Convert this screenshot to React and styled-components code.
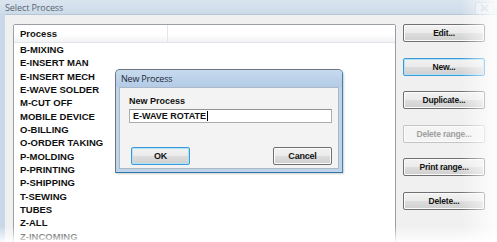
import React from "react";
import styled, { createGlobalStyle } from "styled-components";

const processes = [
  "B-MIXING",
  "E-INSERT MAN",
  "E-INSERT MECH",
  "E-WAVE SOLDER",
  "M-CUT OFF",
  "MOBILE DEVICE",
  "O-BILLING",
  "O-ORDER TAKING",
  "P-MOLDING",
  "P-PRINTING",
  "P-SHIPPING",
  "T-SEWING",
  "TUBES",
  "Z-ALL",
  "Z-INCOMING",
];

const actions = [
  { label: "Edit..." },
  { label: "New...", focused: true },
  { label: "Duplicate..." },
  { label: "Delete range...", disabled: true },
  { label: "Print range..." },
  { label: "Delete..." },
];

const App = () => {
  return (
    <>
      <GlobalStyle />
      <Window>
        <TitleBar>
          <Title>Select Process</Title>
          <CloseBox>
            <svg width="9" height="8" viewBox="0 0 9 8">
              <path d="M1 1 L8 7 M8 1 L1 7" stroke="#b9c4d0" strokeWidth="1.6" />
            </svg>
          </CloseBox>
        </TitleBar>
        <Body>
          <ListBox>
            <ListHeader>
              <HeaderCell>Process</HeaderCell>
              <HeaderRest />
            </ListHeader>
            {processes.map((p) => (
              <Row key={p}>{p}</Row>
            ))}
          </ListBox>
          <ButtonColumn>
            {actions.map((a) => (
              <SideButton key={a.label} $focused={a.focused} $disabled={a.disabled}>
                {a.label}
              </SideButton>
            ))}
          </ButtonColumn>
        </Body>

        <Dialog>
          <DialogTitle>New Process</DialogTitle>
          <DialogBody>
            <Label>New Process</Label>
            <Input>
              E-WAVE ROTATE<Caret />
            </Input>
            <DialogButtons>
              <DialogButton $focused>OK</DialogButton>
              <DialogButton>Cancel</DialogButton>
            </DialogButtons>
          </DialogBody>
        </Dialog>

        <FadeRight />
        <FadeBottom />
      </Window>
    </>
  );
};

export default App;

const GlobalStyle = createGlobalStyle`
  html, body {
    margin: 0;
    padding: 0;
    background: #ffffff;
  }
  body {
    font-family: "Liberation Sans", Arial, sans-serif;
  }
`;

const Window = styled.div`
  position: relative;
  width: 497px;
  height: 242px;
  overflow: hidden;
  background: #c9d8e8;
  display: flex;
  flex-direction: column;
`;

const TitleBar = styled.div`
  height: 14px;
  display: flex;
  align-items: center;
  justify-content: space-between;
  padding: 0 3px 0 5px;
  background: linear-gradient(#d9e4ef, #cddbe9);
`;

const Title = styled.div`
  font-family: "Open Sans", "DejaVu Sans", sans-serif;
  font-size: 9px;
  color: #5a6470;
  letter-spacing: -0.1px;
`;

const CloseBox = styled.div`
  width: 17px;
  height: 11px;
  margin-top: 2px;
  border: 1px solid #c8d2dc;
  border-radius: 2px;
  display: flex;
  align-items: center;
  justify-content: center;
  background: #e3eaf1;
`;

const Body = styled.div`
  flex: 1;
  margin-left: 5px;
  background: #f0f0f0;
  border-top: 1px solid #b7c6d6;
  display: flex;
  align-items: flex-start;
  padding: 9px 0 0 8px;
  gap: 7px;
`;

const ListBox = styled.div`
  width: 381px;
  height: 240px;
  background: #ffffff;
  border: 1px solid #9a9fa6;
  border-radius: 2px 2px 0 0;
`;

const ListHeader = styled.div`
  height: 17px;
  display: flex;
  background: linear-gradient(#ffffff 55%, #f1f2f4);
  border-bottom: 1px solid #e2e4e7;
`;

const HeaderCell = styled.div`
  width: 147px;
  padding-left: 6px;
  display: flex;
  align-items: center;
  font-weight: bold;
  font-size: 9.5px;
  color: #111111;
  border-right: 1px solid #e4e6e9;
`;

const HeaderRest = styled.div`
  flex: 1;
`;

const Row = styled.div`
  height: 13.35px;
  line-height: 13.35px;
  padding-left: 6px;
  font-weight: bold;
  font-size: 9.5px;
  color: #0f0f0f;
  &:first-of-type {
    margin-top: 1px;
  }
`;

const ButtonColumn = styled.div`
  display: flex;
  flex-direction: column;
  gap: 15.6px;
`;

const SideButton = styled.div`
  width: 80px;
  height: 16px;
  display: flex;
  align-items: center;
  justify-content: center;
  font-weight: bold;
  font-size: 8.5px;
  letter-spacing: -0.2px;
  color: ${({ $disabled }) => ($disabled ? "#a0a0a0" : "#141414")};
  border: 1px solid
    ${({ $focused, $disabled }) =>
      $focused ? "#3c9ad6" : $disabled ? "#c4c4c4" : "#707070"};
  border-radius: 2px;
  background: ${({ $disabled }) =>
    $disabled
      ? "#f4f4f4"
      : "linear-gradient(#f2f2f2 0%, #ebebeb 48%, #dddddd 52%, #cfcfcf 100%)"};
  box-shadow: ${({ $focused }) =>
    $focused ? "inset 0 0 0 1px #aee2f8" : "inset 0 0 0 1px #fbfbfb"};
`;

const Dialog = styled.div`
  position: absolute;
  left: 115px;
  top: 69px;
  width: 226px;
  height: 102px;
  border: 1px solid #6e7680;
  border-right-color: #3d84b0;
  border-bottom-color: #2f7aa8;
  border-radius: 5px 5px 0 0;
  background: #c0d4e9;
  display: flex;
  flex-direction: column;
  box-shadow: 1px 1px 2px rgba(0, 0, 0, 0.2);
`;

const DialogTitle = styled.div`
  height: 17px;
  display: flex;
  align-items: center;
  padding-left: 5px;
  font-family: "Open Sans", "DejaVu Sans", sans-serif;
  font-size: 9px;
  color: #1e2a38;
  letter-spacing: -0.2px;
  background: linear-gradient(#c7daee, #b3cbe6);
  border-radius: 4px 4px 0 0;
`;

const DialogBody = styled.div`
  flex: 1;
  margin: 0 3px 3px 3px;
  background: #f3f3f3;
  border: 1px solid #aab8c8;
  padding: 6px 6px 0 9px;
  display: flex;
  flex-direction: column;
`;

const Label = styled.div`
  font-weight: bold;
  font-size: 9px;
  color: #111111;
  height: 13px;
  line-height: 13px;
  margin-top: 1px;
`;

const Input = styled.div`
  height: 12px;
  margin-top: 1px;
  border: 1px solid #abadb3;
  border-top-color: #8e9196;
  background: #ffffff;
  display: flex;
  align-items: center;
  padding-left: 3px;
  font-weight: bold;
  font-size: 9px;
  color: #111111;
`;

const Caret = styled.span`
  display: inline-block;
  width: 1px;
  height: 10px;
  background: #000;
  margin-left: 1px;
`;

const DialogButtons = styled.div`
  display: flex;
  justify-content: space-between;
  margin-top: 24px;
  padding: 0 0 0 2px;
`;

const DialogButton = styled(SideButton)`
  width: 57px;
  font-size: 9px;
`;

const FadeRight = styled.div`
  position: absolute;
  top: 0;
  right: 0;
  width: 36px;
  height: 100%;
  background: linear-gradient(to right, rgba(255, 255, 255, 0), rgba(255, 255, 255, 0.88));
  pointer-events: none;
`;

const FadeBottom = styled.div`
  position: absolute;
  left: 0;
  bottom: 0;
  width: 100%;
  height: 16px;
  background: linear-gradient(rgba(255, 255, 255, 0), rgba(255, 255, 255, 0.9));
  pointer-events: none;
`;
